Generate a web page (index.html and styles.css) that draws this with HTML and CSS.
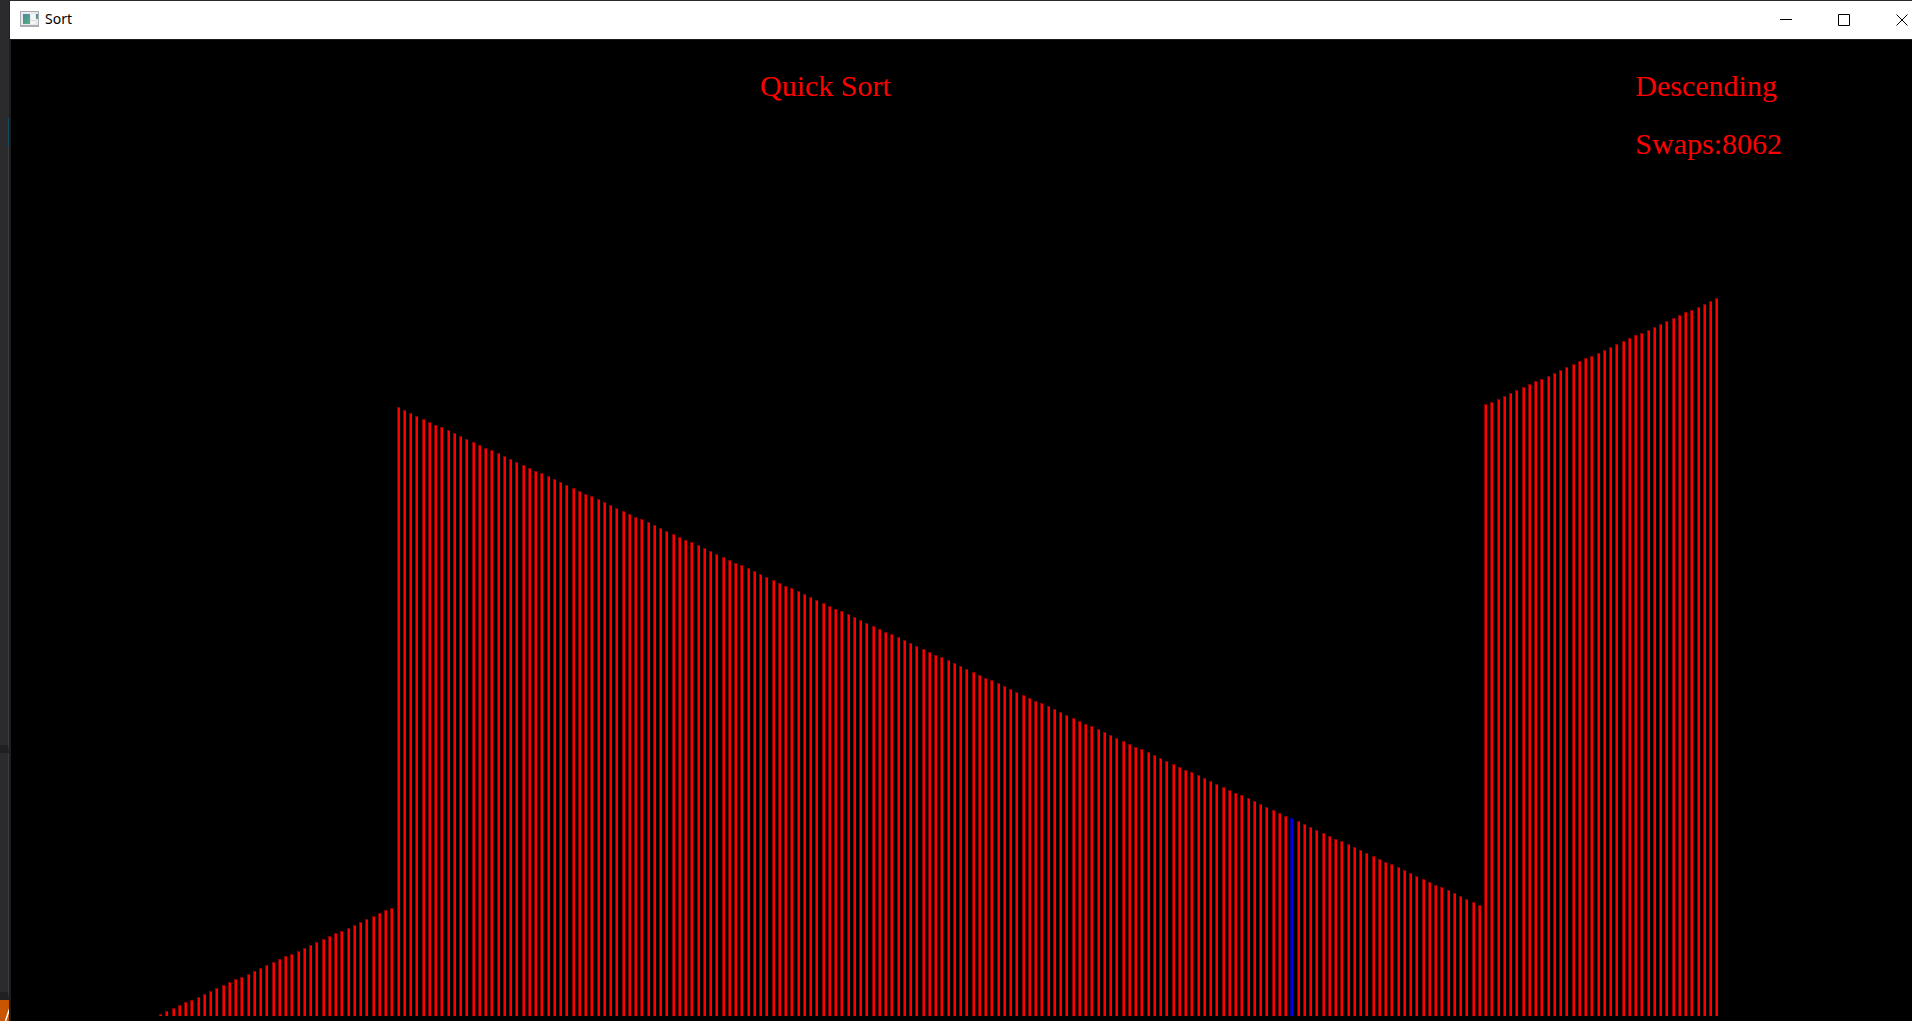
FILE: index.html
```html
<!DOCTYPE html>
<html lang="en">
<head>
<meta charset="utf-8">
<title>Sort</title>
<link rel="stylesheet" href="styles.css">
</head>
<body>
<aside class="backdrop">
  <div class="backdrop-top"></div>
  <div class="backdrop-mark"></div>
  <div class="backdrop-panel backdrop-main"></div>
  <div class="backdrop-panel backdrop-output"></div>
  <svg class="backdrop-status" width="9" height="21" viewBox="0 0 9 21" aria-hidden="true"><path d="M5.500 21 9.500 9" stroke="#fff" stroke-width="1.5"/></svg>
</aside>
<main class="window">
  <header class="titlebar">
    <svg class="app-icon" width="20" height="16" viewBox="0 0 20 16" aria-hidden="true">
      <defs><linearGradient id="screen" x2="1" y2="1"><stop stop-color="#4786a5"/><stop offset="1" stop-color="#59b27a"/></linearGradient></defs>
      <path fill="#a9adb2" d="M0 0h19v16H0z"/><path fill="#e8eaed" d="M1 1h17v13H1z"/>
      <path fill="url(#screen)" d="M3 3h7v10H3z"/><path fill="#f6f6f6" d="M11 3h4v10h-4z"/><path fill="url(#screen)" d="M16 3h2v5h-2z"/><path fill="#d5d8db" d="M11 9h4v1h-4z"/>
    </svg>
    <h1 class="title">Sort</h1>
    <div class="controls">
      <button class="control" aria-label="Minimize"><svg width="12" height="12" viewBox="0 0 12 12"><path d="M0 5.500h12"/></svg></button>
      <button class="control" aria-label="Maximize"><svg width="12" height="12" viewBox="0 0 12 12"><path d="M.5.5h11v11H.5z"/></svg></button>
      <button class="control" aria-label="Close"><svg width="12" height="12" viewBox="0 0 12 12"><path d="m.5.5 11 11m0-11-11 11"/></svg></button>
    </div>
  </header>
  <section class="canvas">
    <div class="info">
      <p class="algorithm">Quick Sort</p>
      <div class="stats"><p>Descending</p><p>Swaps:8062</p></div>
    </div>
    <div class="bars" id="bars"></div>
  </section>
</main>
<script src="bars.js"></script>
</body>
</html>
```
FILE: styles.css
```css
* { box-sizing: border-box; }
body { margin: 0; height: 100vh; display: flex; overflow: hidden; background: #000; }
p, h1 { margin: 0; font-weight: 400; }
.backdrop { width: 10px; flex: none; display: flex; flex-direction: column; background: #2b2b2d; border-right: 1px solid #202022; }
.backdrop-top { height: 118px; }
.backdrop-mark { height: 28px; border-right: 1px solid #174a63; }
.backdrop-panel { border-right: 1px solid #3c3c3e; border-bottom: 8px solid #202022; }
.backdrop-main { flex: 5; }
.backdrop-output { flex: 2; }
.backdrop-status { flex: none; background: #c85500; }
.window { flex: 1; min-width: 0; display: flex; flex-direction: column; border-top: 1px solid #2b2b2d; }
.titlebar { height: 38px; flex: none; display: flex; align-items: center; padding-left: 10px; background: #fff; overflow: hidden; }
.app-icon { flex: none; margin-bottom: 2px; }
.title { margin: 0 0 2px 5px; flex: 1; font: 14px/20px "Noto Sans", sans-serif; color: #000; }
.controls { display: flex; height: 100%; margin-right: -19px; }
.control { width: 58px; border: 0; padding: 0; background: none; display: flex; align-items: center; justify-content: center; }
.control svg { fill: none; stroke: #000; }
.canvas { flex: 1; min-height: 0; display: flex; flex-direction: column; background: #000; border-top: 1px solid #1c1c1c; border-left: 1px solid #1c1c1c; padding-bottom: 5px; color: #f00; }
.info { display: flex; justify-content: space-between; padding: 29px 130px 0 749px; font: 30px/34px "Liberation Serif", "Times New Roman", serif; }
.stats { display: flex; flex-direction: column; gap: 24px; }
.bars { flex: 1; min-height: 0; margin: 0 193px 0 148px; display: flex; align-items: flex-end; justify-content: space-between; }
.bar { width: 3px; flex: none; background: #f00; border: solid #8c0000; border-width: 1px 0 0 1px; }
.bar-active { background: #00e; border-color: #00008c; }
```
FILE: bars.js
```js
const COUNT = 250;
const SORTED_FROM = 38;
const SORTED_TO = 211;
const ACTIVE = 181;
const bars = document.getElementById("bars");

for (let i = 0; i < COUNT; i++) {
  const reversed = i >= SORTED_FROM && i <= SORTED_TO;
  const value = reversed ? SORTED_FROM + SORTED_TO - i : i;
  const bar = document.createElement("div");
  bar.className = i === ACTIVE ? "bar bar-active" : "bar";
  bar.style.height = Math.round(2 + value * 2.875) + "px";
  bars.append(bar);
}
```
